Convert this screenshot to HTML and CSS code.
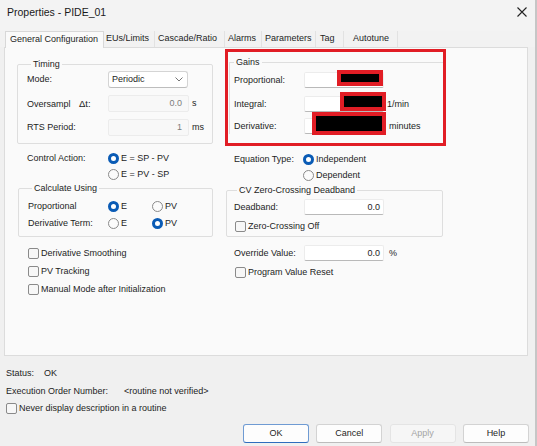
FILE: index.html
```html
<!DOCTYPE html>
<html>
<head>
<meta charset="utf-8">
<link rel="stylesheet" href="styles.css">
</head>
<body>
<div class="win">
  <div class="titlebar">
    <span class="title">Properties - PIDE_01</span>
    <svg class="close" width="10" height="10" viewBox="0 0 10 10"><path d="M0.5 0.5 L9.5 9.5 M9.5 0.5 L0.5 9.5" stroke="#222" stroke-width="1.1" fill="none"/></svg>
  </div>
  <div class="tabs">
    <div class="tab active t-gen">General Configuration</div>
    <div class="tab t-eus">EUs/Limits</div>
    <div class="tab t-cas">Cascade/Ratio</div>
    <div class="tab t-ala">Alarms</div>
    <div class="tab t-par">Parameters</div>
    <div class="tab t-tag">Tag</div>
    <div class="tab t-aut">Autotune</div>
  </div>
  <div class="panel">
    <div class="col left">
      <fieldset class="grp timing">
        <legend>Timing</legend>
        <div class="frow">
          <span class="lbl w81">Mode:</span>
          <div class="select"><span>Periodic</span>
            <svg width="8" height="5" viewBox="0 0 8 5"><path d="M0.5 0.5 L4 4 L7.5 0.5" stroke="#666" fill="none" stroke-width="0.9"/></svg>
          </div>
        </div>
        <div class="frow gap6">
          <span class="lbl w81">Oversampl <span class="delta">&Delta;t:</span></span>
          <div class="dinput">0.0</div><span class="unit">s</span>
        </div>
        <div class="frow gap6">
          <span class="lbl w81">RTS Period:</span>
          <div class="dinput">1</div><span class="unit">ms</span>
        </div>
      </fieldset>

      <div class="ctrl">
        <span class="lbl ctrl-lbl">Control Action:</span>
        <div class="opts">
          <div class="opt"><span class="radio on"></span>E = SP - PV</div>
          <div class="opt"><span class="radio"></span>E = PV - SP</div>
        </div>
      </div>

      <fieldset class="grp calc">
        <legend>Calculate Using</legend>
        <div class="crow">
          <span class="lbl w80">Proportional</span>
          <div class="copt"><span class="radio on"></span>E</div>
          <div class="copt"><span class="radio"></span>PV</div>
        </div>
        <div class="crow gap1">
          <span class="lbl w80">Derivative Term:</span>
          <div class="copt"><span class="radio"></span>E</div>
          <div class="copt"><span class="radio on"></span>PV</div>
        </div>
      </fieldset>

      <div class="checks">
        <div class="chk"><span class="cb"></span>Derivative Smoothing</div>
        <div class="chk"><span class="cb"></span>PV Tracking</div>
        <div class="chk"><span class="cb"></span>Manual Mode after Initialization</div>
      </div>
    </div>

    <div class="col right">
      <div class="redbox">
        <fieldset class="grp gains">
          <legend>Gains</legend>
          <div class="grow">
            <span class="lbl w70">Proportional:</span>
            <div class="iwrap"><div class="winput"></div><div class="redact r1"></div></div>
          </div>
          <div class="grow gap7">
            <span class="lbl w70">Integral:</span>
            <div class="iwrap"><div class="winput"></div><div class="redact r2"></div></div>
            <span class="unit u3">1/min</span>
          </div>
          <div class="grow gap5">
            <span class="lbl w70">Derivative:</span>
            <div class="iwrap"><div class="winput"></div><div class="redact r3"></div></div>
            <span class="unit u5">minutes</span>
          </div>
        </fieldset>
      </div>

      <div class="eq">
        <span class="lbl eq-lbl">Equation Type:</span>
        <div class="opts">
          <div class="opt"><span class="radio on"></span>Independent</div>
          <div class="opt"><span class="radio"></span>Dependent</div>
        </div>
      </div>

      <fieldset class="grp cv">
        <legend>CV Zero-Crossing Deadband</legend>
        <div class="grow">
          <span class="lbl w70">Deadband:</span>
          <div class="winput val">0.0</div>
        </div>
        <div class="chk zc"><span class="cb"></span>Zero-Crossing Off</div>
      </fieldset>

      <div class="grow ovr">
        <span class="lbl w70">Override Value:</span>
        <div class="winput val">0.0</div><span class="unit u5">%</span>
      </div>
      <div class="chk pvr"><span class="cb"></span>Program Value Reset</div>
    </div>
  </div>

  <div class="footer">
    <div class="srow"><span class="slbl w38">Status:</span><span>OK</span></div>
    <div class="srow gap2"><span class="slbl w118">Execution Order Number:</span><span>&lt;routine not verified&gt;</span></div>
    <div class="chk never"><span class="cb"></span>Never display description in a routine</div>
    <div class="buttons">
      <div class="btn default">OK</div>
      <div class="btn">Cancel</div>
      <div class="btn disabled">Apply</div>
      <div class="btn">Help</div>
    </div>
  </div>
</div>
</body>
</html>
```
FILE: styles.css
```css
* { box-sizing: border-box; }
body {
  margin: 0;
  font-family: "Liberation Sans", Arial, sans-serif;
  font-size: 9px;
  color: #1d1d1d;
  background: #f0f0f0;
}
.win {
  width: 537px;
  height: 446px;
  background: #f0f0f0;
  border-right: 2px solid #c6c6c6;
}
.titlebar {
  height: 31px;
  display: flex;
  align-items: flex-start;
  padding: 6px 0 0 7px;
  background: #f3f3f3;
}
.title { font-size: 10.5px; line-height: 12px; color: #1a1a1a; }
.close { margin-left: auto; margin-right: 8px; margin-top: 1px; }

.tabs {
  height: 16px;
  display: flex;
  padding-left: 5px;
  background: #f2f2f2;
}
.tab {
  line-height: 15px;
  height: 16px;
  white-space: nowrap;
  border-right: 1px solid #e2e2e2;
  color: #1d1d1d;
}
.tab.active {
  background: #fafafa;
  border: 1px solid #d8d8d8;
  border-bottom: none;
  height: 17px;
  position: relative;
  z-index: 1;
}
.t-gen { width: 99px; padding-left: 4px; }
.t-eus { width: 51px; padding-left: 2px; }
.t-cas { width: 70px; padding-left: 3px; }
.t-ala { width: 37px; padding-left: 3px; }
.t-par { width: 54px; padding-left: 3px; }
.t-tag { width: 28px; padding-left: 4px; }
.t-aut { width: 54px; padding-left: 9px; }

.panel {
  margin-left: 4px;
  width: 524px;
  height: 309px;
  border: 1px solid #dcdcdc;
  background: #fafafa;
  display: flex;
  align-items: flex-start;
  padding-left: 12px;
  gap: 12px;
}
.col { display: flex; flex-direction: column; }
.col.left { width: 196px; }
.col.right { width: 221px; }

fieldset.grp {
  margin: 0;
  border: 1px solid #dedede;
  border-radius: 2px;
  min-inline-size: 0;
}
fieldset.grp legend {
  padding: 0 2px;
  margin-left: 4px;
  line-height: 12px;
  font-size: 9px;
  color: #1d1d1d;
}
.lbl { white-space: nowrap; flex: none; }
.w81 { width: 81px; }
.w80 { width: 80px; }
.w70 { width: 70px; }
.w38 { width: 38px; }
.w118 { width: 118px; }

fieldset.timing {
  margin-top: 10px;
  width: 196px;
  padding: 0 0 7px 9px;
}
.frow { display: flex; align-items: center; height: 18px; }
.gap6 { margin-top: 6px; }
.gap7 { margin-top: 7px; }
.gap5 { margin-top: 5px; }
.gap1 { margin-top: 1px; }
.gap2 { margin-top: 2px; }
.delta { margin-left: 6px; font-size: 9.5px; }
.select {
  width: 80px;
  height: 17px;
  background: #fff;
  border: 1px solid #d4d4d4;
  border-bottom-color: #bdbdbd;
  border-radius: 3px;
  display: flex;
  align-items: center;
  justify-content: space-between;
  padding: 0 4px 0 3px;
}
.dinput {
  width: 81px;
  height: 17px;
  border: 1px solid #ececec;
  border-radius: 2px;
  background: #f8f8f8;
  color: #7d7d7d;
  text-align: right;
  padding-right: 6px;
  line-height: 15px;
}
.unit { margin-left: 3px; white-space: nowrap; }
.u3 { margin-left: 3px; }
.u5 { margin-left: 5px; }

.ctrl, .eq { display: flex; align-items: flex-start; }
.ctrl { margin-top: 6px; }
.ctrl-lbl { width: 91px; padding-left: 10px; line-height: 16px; }
.eq { margin-top: 5px; }
.eq-lbl { width: 78px; padding-left: 9px; line-height: 16px; }
.opts { display: flex; flex-direction: column; }
.opt, .copt { display: flex; align-items: center; height: 16px; white-space: nowrap; }
.copt { width: 44px; }

.radio {
  width: 11px;
  height: 11px;
  border-radius: 50%;
  border: 1px solid #8a8a8a;
  background: #fbfbfb;
  margin-right: 2px;
  flex: none;
}
.radio.on {
  border: 3px solid #0a5bb5;
  background: #fff;
}

fieldset.calc {
  margin-top: 0;
  margin-left: 1px;
  width: 195px;
  padding: 4px 0 5px 9px;
}
.crow { display: flex; align-items: center; height: 16px; }

.checks { margin-top: 8px; padding-left: 11px; display: flex; flex-direction: column; gap: 2px; }
.chk { display: flex; align-items: center; height: 16px; white-space: nowrap; }
.cb {
  width: 11px;
  height: 11px;
  border: 1px solid #8a8a8a;
  border-radius: 2px;
  background: #f7f7f7;
  margin-right: 2px;
  flex: none;
}

.redbox {
  margin-top: 1px;
  width: 221px;
  height: 97px;
  border: 3px solid #e11d25;
}
fieldset.gains {
  margin-top: 4px;
  margin-left: 1px;
  width: 214px;
  padding: 3px 0 0 4px;
  border-right: none;
  border-bottom: none;
  border-radius: 0;
}
fieldset.gains legend { margin-left: 0; }
.grow { display: flex; align-items: center; height: 17px; }
.iwrap { position: relative; width: 80px; height: 16px; }
.winput {
  width: 80px;
  height: 16px;
  background: #fff;
  border: 1px solid #ececec;
  border-bottom-color: #b9b9b9;
  border-radius: 2px;
}
.winput.val { text-align: right; padding-right: 3px; line-height: 14px; color: #1d1d1d; }
.redact {
  position: absolute;
  background: #000;
  border: 4px solid #e11d25;
}
.r1 { left: 33px; top: -2px; width: 46px; height: 16px; }
.r2 { left: 36px; top: -4px; width: 46px; height: 19px; }
.r3 { left: 8px; top: -6px; width: 74px; height: 23px; }

fieldset.cv {
  margin-top: 1px;
  margin-left: 1px;
  width: 217px;
  padding: 2px 0 2px 7px;
}
fieldset.cv legend { margin-left: 3px; }
.zc { margin-top: 3px; margin-left: 1px; }
.ovr { margin-top: 7px; padding-left: 9px; }
.pvr { margin-top: 3px; padding-left: 10px; }

.footer { padding-left: 6px; }
.srow { display: flex; align-items: center; height: 16px; white-space: nowrap; }
.srow:first-child { margin-top: 9px; }
.slbl { flex: none; }
.never { margin-top: 1px; }
.buttons {
  margin-top: 8px;
  padding-left: 237px;
  display: flex;
  gap: 7.3px;
}
.btn {
  width: 66px;
  height: 19px;
  background: #fdfdfd;
  border: 1px solid #d3d3d3;
  border-bottom-color: #bcbcbc;
  border-radius: 3px;
  text-align: center;
  line-height: 17px;
  color: #1d1d1d;
}
.btn.default { border-color: #6f9bd3; border-bottom-color: #2f6dbd; }
.btn.disabled { background: #f6f6f6; border-color: #e4e4e4; color: #a5a5a5; }
```
